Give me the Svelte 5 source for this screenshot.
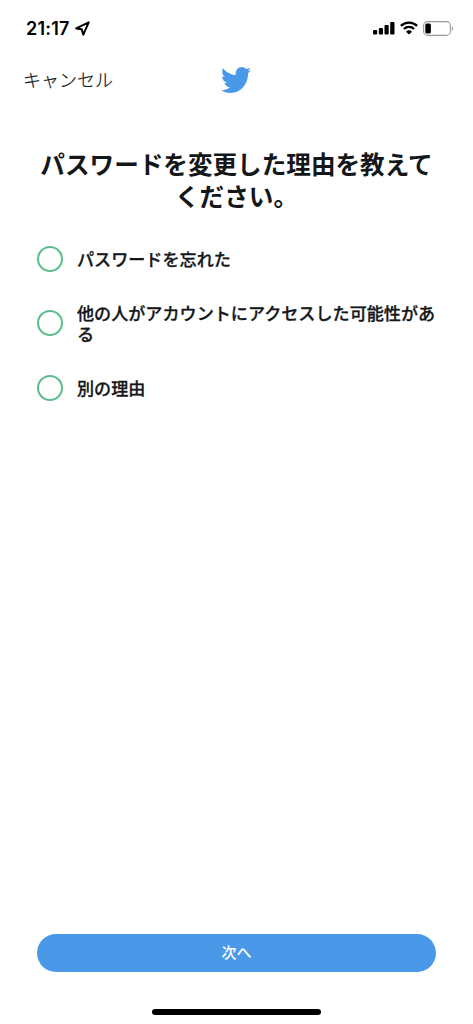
<script>
  let selected = $state(null);

  const reasons = [
    { id: 'forgot', label: 'パスワードを忘れた' },
    { id: 'compromised', label: '他の人がアカウントにアクセスした可能性がある' },
    { id: 'other', label: '別の理由' }
  ];
</script>

<div class="screen">
  <div class="status-bar">
    <div class="clock">
      <span>21:17</span>
      <svg width="15" height="15" viewBox="0 0 15 15">
        <path d="M13.7 1.3 1.2 7.4l5.5.9 1.6 5.4z" fill="none" stroke="#000" stroke-width="2" stroke-linejoin="round" />
      </svg>
    </div>
    <div class="indicators">
      <svg width="22" height="14" viewBox="0 0 22 14">
        <rect x="0" y="9" width="4.2" height="4.5" rx="1" />
        <rect x="5.8" y="7" width="4.2" height="6.5" rx="1" />
        <rect x="11.5" y="4" width="4.2" height="9.5" rx="1" />
        <rect x="17.2" y="1" width="4.3" height="12.5" rx="1" />
      </svg>
      <svg class="wifi" width="18" height="14" viewBox="0 0 18 14">
        <path d="M.9 4.9a11.6 11.6 0 0 1 16.2 0M3.9 8a7.3 7.3 0 0 1 10.2 0" fill="none" stroke="#000" stroke-width="2.4" />
        <path d="M9 13.6 6 10.7a4.3 4.3 0 0 1 6 0z" />
      </svg>
      <svg class="battery" width="31" height="15" viewBox="0 0 31 15">
        <rect x="0.6" y="0.6" width="26.8" height="13.8" rx="4" fill="none" stroke="#999" stroke-width="1.1" />
        <rect x="2.3" y="2.4" width="5.6" height="10.2" rx="1.5" />
        <path d="M28.8 5.2c1.8.8 1.8 3.8 0 4.6z" fill="#999" />
      </svg>
    </div>
  </div>

  <header class="nav">
    <button class="cancel">キャンセル</button>
    <svg class="logo" width="30" height="26" viewBox="0.94 2.75 22.7 18.46" preserveAspectRatio="none">
      <path d="M23.643 4.937c-.835.37-1.732.62-2.675.733.962-.576 1.7-1.49 2.048-2.578-.9.534-1.897.922-2.958 1.13-.85-.904-2.06-1.47-3.4-1.47-2.572 0-4.658 2.086-4.658 4.66 0 .364.042.718.12 1.06-3.873-.195-7.304-2.05-9.602-4.868-.4.69-.63 1.49-.63 2.342 0 1.616.823 3.043 2.072 3.878-.764-.025-1.482-.234-2.11-.583v.06c0 2.257 1.605 4.14 3.737 4.568-.392.106-.803.162-1.227.162-.3 0-.593-.028-.877-.082.593 1.85 2.313 3.198 4.352 3.234-1.595 1.25-3.604 1.995-5.786 1.995-.376 0-.747-.022-1.112-.065 2.062 1.323 4.51 2.093 7.14 2.093 8.57 0 13.255-7.098 13.255-13.254 0-.2-.005-.402-.014-.602.91-.658 1.7-1.477 2.323-2.41z" />
    </svg>
  </header>

  <main>
    <h1>パスワードを変更した理由を教えてください。</h1>
    <div class="reasons" role="radiogroup">
      {#each reasons as reason (reason.id)}
        <button
          class="reason"
          role="radio"
          aria-checked={selected === reason.id}
          onclick={() => (selected = reason.id)}
        >
          <span class="radio" class:checked={selected === reason.id}></span>
          <span class="label">{reason.label}</span>
        </button>
      {/each}
    </div>
  </main>

  <footer>
    <button class="next">次へ</button>
    <div class="home-indicator"></div>
  </footer>
</div>

<style>
  :global(body) {
    background: #fff;
  }

  .screen {
    display: flex;
    flex-direction: column;
    box-sizing: border-box;
    height: 1024px;
    font-family: Inter, 'Noto Sans CJK JP', sans-serif;
    color: #14171a;
    background: #fff;
  }

  button {
    border: none;
    background: none;
    padding: 0;
    color: inherit;
    font-family: inherit;
    cursor: pointer;
  }

  svg {
    display: block;
  }

  .status-bar {
    display: flex;
    align-items: center;
    justify-content: space-between;
    height: 56px;
    padding: 0 19px 0 26px;
    color: #000;
  }

  .clock {
    display: flex;
    align-items: center;
    gap: 5px;
    font-size: 18px;
    font-weight: 600;
    letter-spacing: 0.2px;
  }

  .indicators {
    display: flex;
    align-items: center;
  }

  .wifi {
    margin-left: 5px;
  }

  .battery {
    margin-left: 5px;
  }

  .nav {
    display: grid;
    grid-template-columns: 1fr auto 1fr;
    align-items: center;
    height: 48px;
    padding: 0 24px 0 23px;
  }

  .cancel {
    justify-self: start;
    padding-top: 2px;
    font-size: 18px;
    font-weight: 300;
    line-height: 24px;
    -webkit-text-stroke: 0.2px currentColor;
  }

  .logo {
    fill: #4a99e9;
  }

  main {
    flex: 1;
    padding: 46px 37px 0;
  }

  h1 {
    margin: 0;
    font-size: 24.6px;
    line-height: 31.5px;
    font-weight: 700;
    text-align: center;
  }

  .reasons {
    display: flex;
    flex-direction: column;
    gap: 21.5px;
    margin-top: 24px;
  }

  .reason {
    display: flex;
    align-items: center;
    gap: 14px;
    min-height: 43px;
    text-align: left;
  }

  .radio {
    flex: none;
    box-sizing: border-box;
    width: 26px;
    height: 26px;
    border: 2px solid #5bbd8b;
    border-radius: 50%;
  }

  .radio.checked {
    border-width: 8px;
  }

  .label {
    margin: 1px 0 -1px;
    font-size: 17.1px;
    line-height: 21.5px;
    font-weight: 500;
    -webkit-text-stroke: 0.3px currentColor;
  }

  footer {
    display: flex;
    flex-direction: column;
    align-items: center;
    padding: 0 37px 9px;
  }

  .next {
    width: 100%;
    height: 38px;
    padding-bottom: 3px;
    border-radius: 19px;
    background: #4a99e9;
    color: #fff;
    font-size: 15px;
    font-weight: 500;
  }

  .home-indicator {
    width: 169px;
    height: 6px;
    margin-top: 37px;
    border-radius: 3px;
    background: #000;
  }
</style>
